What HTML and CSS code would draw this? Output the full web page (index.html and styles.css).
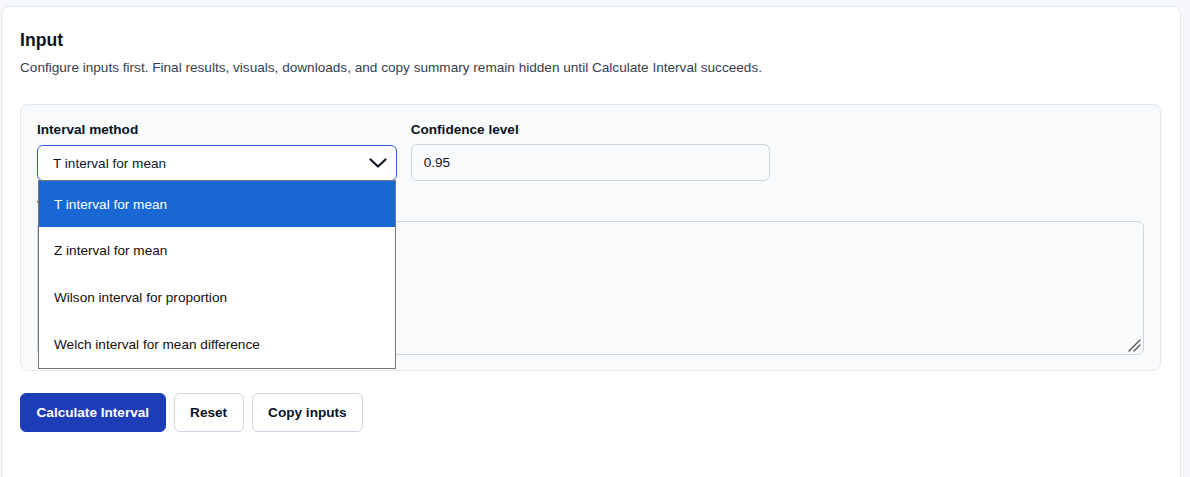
FILE: index.html
```html
<!DOCTYPE html>
<html lang="en">
<head>
<meta charset="utf-8">
<title>Input</title>
<link rel="stylesheet" href="styles.css">
</head>
<body>
<main class="page">
  <section class="card">
    <h2 class="card-title">Input</h2>
    <p class="card-desc">Configure inputs first. Final results, visuals, downloads, and copy summary remain hidden until Calculate Interval succeeds.</p>
    <div class="panel">
      <div class="grid">
        <div class="field">
          <label class="label">Interval method</label>
          <div class="select-wrap">
            <div class="select focused">
              <span>T interval for mean</span>
              <svg class="chev" width="18" height="10" viewBox="0 0 18 10"><path d="M1.5 1.5 L9 8.5 L16.5 1.5" fill="none" stroke="#111827" stroke-width="2.2" stroke-linecap="round" stroke-linejoin="round"/></svg>
            </div>
            <ul class="dropdown">
              <li class="opt active">T interval for mean</li>
              <li class="opt">Z interval for mean</li>
              <li class="opt">Wilson interval for proportion</li>
              <li class="opt">Welch interval for mean difference</li>
            </ul>
          </div>
        </div>
        <div class="field">
          <label class="label">Confidence level</label>
          <div class="input">0.95</div>
        </div>
        <div class="field"></div>
        <div class="field wide">
          <label class="label">Values</label>
          <div class="textarea">
            <svg class="grip" width="14" height="14" viewBox="0 0 14 14"><path d="M2 13 L13 2 M7 13 L13 7" stroke="#555" stroke-width="1.4" stroke-linecap="round"/></svg>
          </div>
        </div>
      </div>
    </div>
    <div class="actions">
      <button class="btn primary">Calculate Interval</button>
      <button class="btn">Reset</button>
      <button class="btn">Copy inputs</button>
    </div>
  </section>
</main>
</body>
</html>
```

FILE: styles.css
```css
* { box-sizing: border-box; }
html, body { margin: 0; padding: 0; }
body {
  background: #f6f8fb;
  font-family: "Liberation Sans", Arial, sans-serif;
  color: #0f172a;
  height: 477px;
  overflow: hidden;
}
.page {
  padding: 6px 9px 0 1px;
}
.card {
  background: #ffffff;
  border: 1px solid #e2e8f0;
  border-radius: 8px;
  padding: 21px 19px 40px 18px;
  min-height: 520px;
}
.card-title {
  margin: 0;
  font-size: 17.6px;
  font-weight: 700;
  line-height: 24px;
  color: #0b1220;
}
.card-desc {
  margin: 6px 0 0;
  font-size: 13.6px;
  line-height: 20px;
  color: #334155;
}
.panel {
  margin-top: 26px;
  background: #f8fafc;
  border: 1px solid #e2e8f0;
  border-radius: 8px;
  padding: 16px 16px 15px;
}
.grid {
  display: grid;
  grid-template-columns: 1fr 1fr 1fr;
  column-gap: 14px;
  row-gap: 16px;
}
.field { display: flex; flex-direction: column; gap: 7px; }
.field.wide { grid-column: 1 / -1; }
.label {
  font-size: 13.6px;
  font-weight: 700;
  line-height: 17px;
  color: #0b1220;
}
.select-wrap { position: relative; }
.select {
  height: 36px;
  background: #fff;
  border: 1px solid #2f62d6;
  border-radius: 6px;
  padding: 0 9px 0 15px;
  display: flex;
  align-items: center;
  justify-content: space-between;
  font-size: 13.6px;
  color: #0f172a;
}
.chev { display: block; }
.dropdown {
  position: absolute;
  left: 1px;
  top: 35px;
  width: 358px;
  margin: 0;
  padding: 0;
  list-style: none;
  background: #ffffff;
  border: 1px solid #767676;
  z-index: 5;
}
.opt {
  height: 47px;
  display: flex;
  align-items: center;
  padding-left: 15px;
  font-size: 13.6px;
  color: #111111;
}
.opt:first-child { height: 46px; }
.opt.active {
  background: #1967d2;
  color: #ffffff;
}
.input {
  height: 37px;
  margin-top: -1px;
  background: #f8fafc;
  border: 1px solid #cbd5e1;
  border-radius: 6px;
  padding: 0 12px;
  display: flex;
  align-items: center;
  font-size: 13.6px;
  color: #0f172a;
}
.textarea {
  position: relative;
  height: 134px;
  background: #f8fafc;
  border: 1px solid #cbd5e1;
  border-radius: 6px;
}
.grip {
  position: absolute;
  right: 2px;
  bottom: 2px;
}
.actions {
  margin-top: 22px;
  display: flex;
  gap: 8px;
}
.btn {
  height: 39px;
  padding: 0 15.5px;
  background: #ffffff;
  border: 1px solid #cbd5e1;
  border-radius: 6px;
  font-family: "Liberation Sans", Arial, sans-serif;
  font-size: 13.6px;
  font-weight: 700;
  color: #0b1220;
}
.btn.primary {
  background: #1d3db6;
  border-color: #1d3db6;
  color: #ffffff;
}
```
